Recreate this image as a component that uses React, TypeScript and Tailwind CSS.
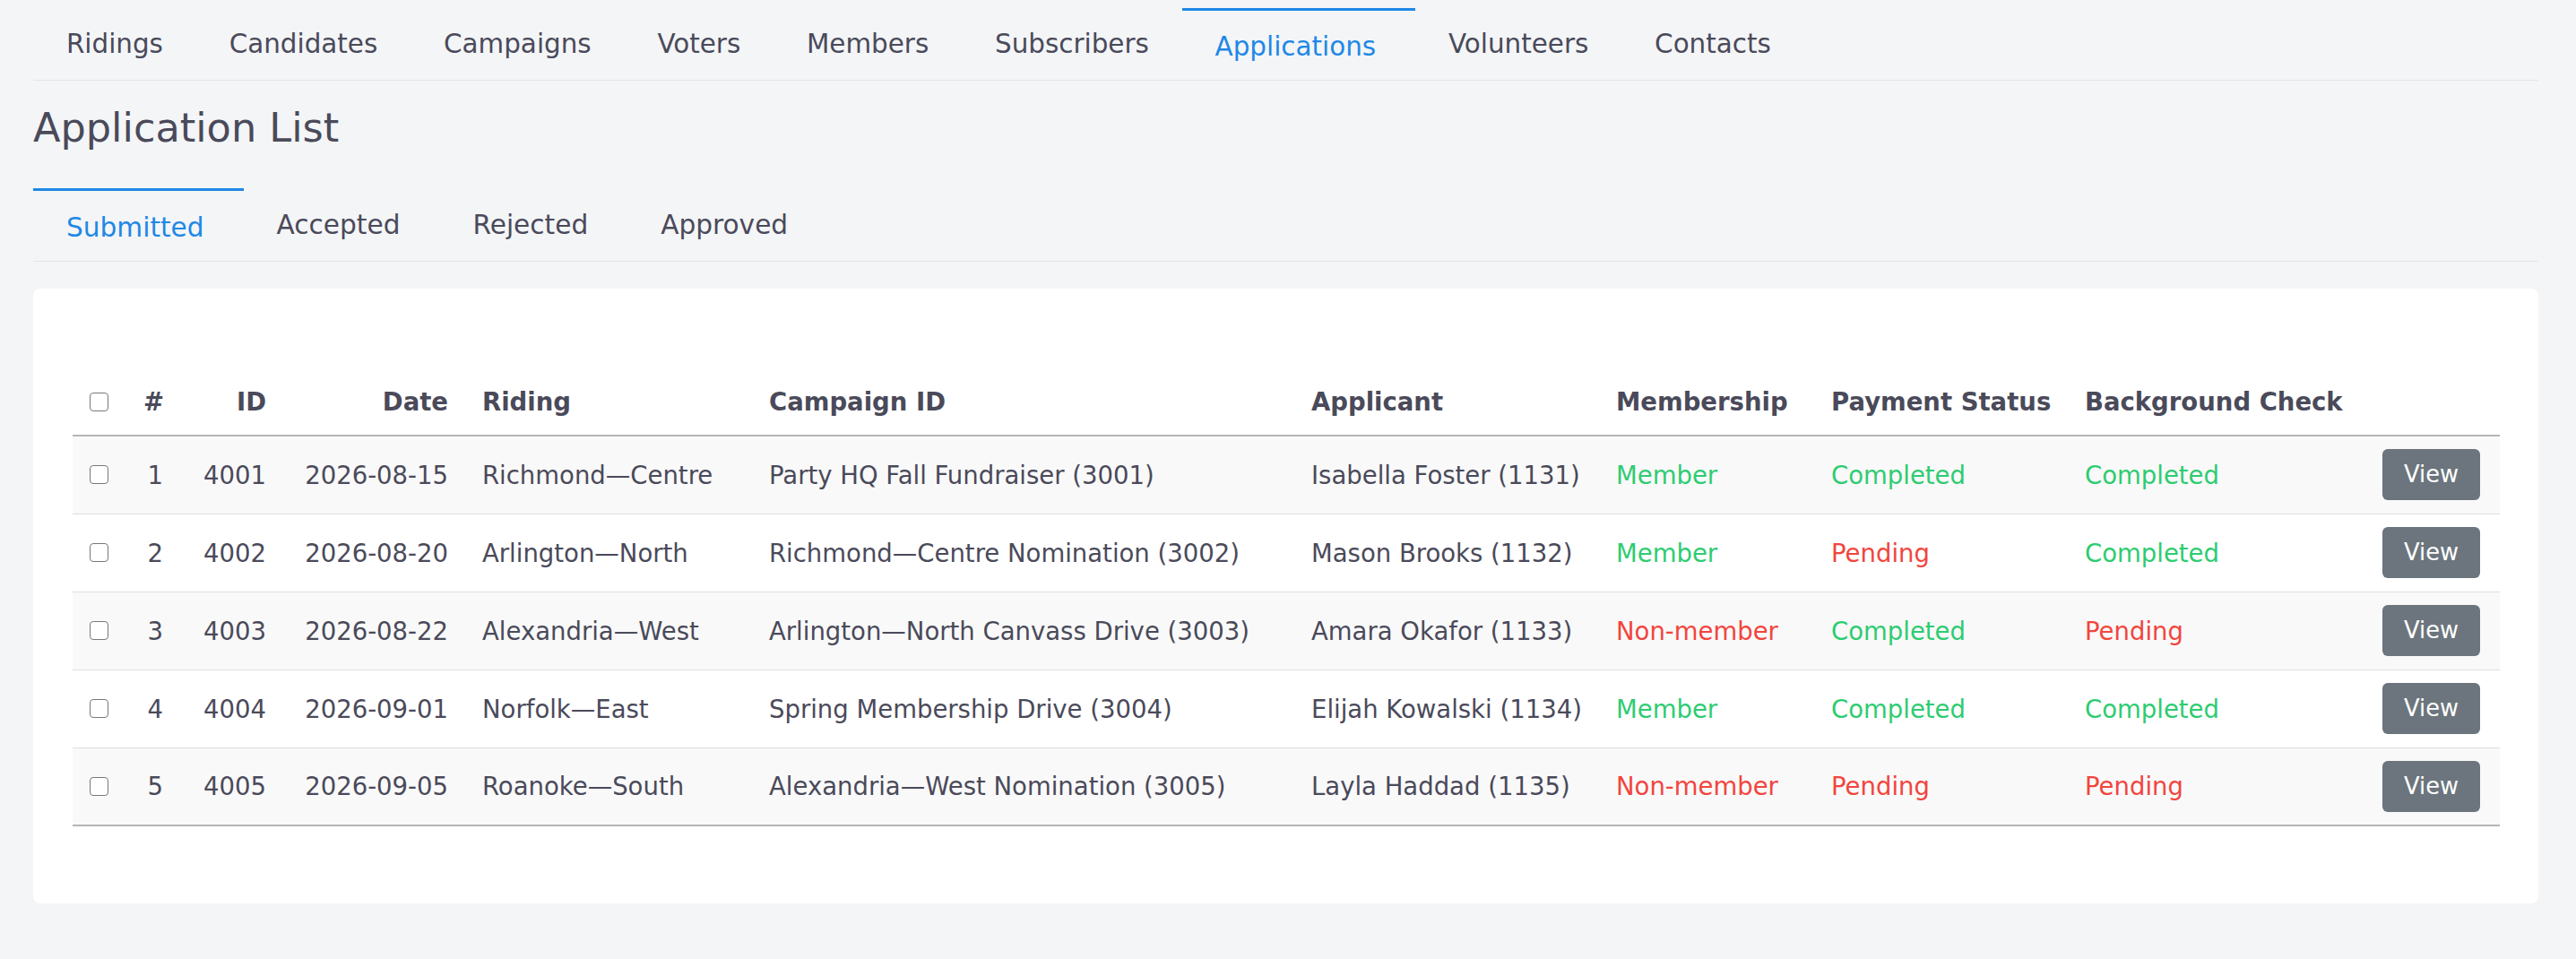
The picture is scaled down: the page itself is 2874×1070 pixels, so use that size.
import React from 'react';

interface Application {
    id: number;
    date: string;
    riding: string;
    campaign: string;
    applicant: string;
    member: boolean;
    payment: 'Completed' | 'Pending';
    background: 'Completed' | 'Pending';
}

const applications: Application[] = [
    { id: 4001, date: '2026-08-15', riding: 'Richmond—Centre', campaign: 'Party HQ Fall Fundraiser (3001)', applicant: 'Isabella Foster (1131)', member: true, payment: 'Completed', background: 'Completed' },
    { id: 4002, date: '2026-08-20', riding: 'Arlington—North', campaign: 'Richmond—Centre Nomination (3002)', applicant: 'Mason Brooks (1132)', member: true, payment: 'Pending', background: 'Completed' },
    { id: 4003, date: '2026-08-22', riding: 'Alexandria—West', campaign: 'Arlington—North Canvass Drive (3003)', applicant: 'Amara Okafor (1133)', member: false, payment: 'Completed', background: 'Pending' },
    { id: 4004, date: '2026-09-01', riding: 'Norfolk—East', campaign: 'Spring Membership Drive (3004)', applicant: 'Elijah Kowalski (1134)', member: true, payment: 'Completed', background: 'Completed' },
    { id: 4005, date: '2026-09-05', riding: 'Roanoke—South', campaign: 'Alexandria—West Nomination (3005)', applicant: 'Layla Haddad (1135)', member: false, payment: 'Pending', background: 'Pending' },
];

const mainTabs = ['Ridings', 'Candidates', 'Campaigns', 'Voters', 'Members', 'Subscribers', 'Applications', 'Volunteers', 'Contacts'];
const subTabs = ['Submitted', 'Accepted', 'Rejected', 'Approved'];

// top nav: inactive tabs are symmetric, the active one is a bit wider on the right
function MainTabs() {
    return (
        <div className="flex border-b border-[#e3e4e7] text-[29.4px]">
            {mainTabs.map((item) =>
                item === 'Applications' ? (
                    <div key={item} className="border-t-[3px] border-[#1e88e5] pl-[36.9px] pr-[44px] pt-[18px] pb-[15px] leading-[44px] text-[#1e88e5]">
                        {item}
                    </div>
                ) : (
                    <div key={item} className="px-[36.9px] pt-[18px] pb-[18px] leading-[44px]">
                        {item}
                    </div>
                )
            )}
        </div>
    );
}

function SubTabs() {
    return (
        <div className="flex border-b border-[#e3e4e7] text-[29.6px]">
            {subTabs.map((item) =>
                item === 'Submitted' ? (
                    <div key={item} className="border-t-[3px] border-[#1e88e5] pl-[37px] pr-[44px] pt-[19px] pb-[15px] leading-[44px] text-[#1e88e5]">
                        {item}
                    </div>
                ) : (
                    <div key={item} className="pl-[37px] pr-[44px] pt-[19px] pb-[18px] leading-[44px]">
                        {item}
                    </div>
                )
            )}
        </div>
    );
}

function Box() {
    return <span className="inline-block w-[21px] h-[21px] align-middle -translate-y-[2px] rounded-[4px] border-[1.5px] border-[#787878] bg-white"></span>;
}

const statusColor = (ok: boolean) => (ok ? 'text-[#2ecc71]' : 'text-[#f2453d]');

export default function App() {
    return (
        <div
            className="min-h-screen bg-[#f4f5f7] pt-[9px] pl-[37px] pr-[42px] text-[#4a4a5a]"
            style={{ fontFamily: '"DejaVu Sans", sans-serif' }}
        >
            <MainTabs />

            <h1 className="mt-[27px] mb-[40px] text-[44.6px] leading-[53px] font-normal">Application List</h1>

            <SubTabs />

            <div className="mt-[30px] bg-white rounded-[8px] p-[44px]">
                <div className="pt-[40px] pb-[42px]">
                    <table className="w-full table-fixed border-collapse text-[27.5px]">
                        <colgroup>
                            <col className="w-[60px]" />
                            <col className="w-[60px]" />
                            <col className="w-[115px]" />
                            <col className="w-[203px]" />
                            <col className="w-[320px]" />
                            <col className="w-[605px]" />
                            <col className="w-[340px]" />
                            <col className="w-[240px]" />
                            <col className="w-[283px]" />
                            <col className="w-[332px]" />
                            <col className="w-[150px]" />
                        </colgroup>
                        <thead>
                            <tr className="border-b-2 border-[#b5b5b5]">
                                <th className="pl-[19px] pt-[20px] pb-[15px] leading-[44px] text-left"><Box /></th>
                                <th className="px-[19px] pt-[20px] pb-[15px] leading-[44px] font-bold text-right">#</th>
                                <th className="px-[19px] pt-[20px] pb-[15px] leading-[44px] font-bold text-right">ID</th>
                                <th className="px-[19px] pt-[20px] pb-[15px] leading-[44px] font-bold text-right">Date</th>
                                <th className="px-[19px] pt-[20px] pb-[15px] leading-[44px] font-bold text-left">Riding</th>
                                <th className="px-[19px] pt-[20px] pb-[15px] leading-[44px] font-bold text-left">Campaign ID</th>
                                <th className="px-[19px] pt-[20px] pb-[15px] leading-[44px] font-bold text-left">Applicant</th>
                                <th className="px-[19px] pt-[20px] pb-[15px] leading-[44px] font-bold text-left">Membership</th>
                                <th className="px-[19px] pt-[20px] pb-[15px] leading-[44px] font-bold text-left whitespace-nowrap">Payment Status</th>
                                <th className="px-[19px] pt-[20px] pb-[15px] leading-[44px] font-bold text-left whitespace-nowrap">Background Check</th>
                                <th className="px-[19px] pt-[20px] pb-[15px] leading-[44px]"></th>
                            </tr>
                        </thead>
                        <tbody>
                            {applications.map((app, i) => (
                                <tr
                                    key={app.id}
                                    className={`${i % 2 === 0 ? 'bg-[#f9f9f9]' : 'bg-white'} ${i === applications.length - 1 ? 'border-b-2 border-[#b5b5b5]' : 'border-b border-[#dedede]'}`}
                                >
                                    <td className="pl-[19px] h-[87px] align-middle leading-[44px]"><Box /></td>
                                    <td className="px-[19px] h-[87px] align-middle leading-[44px] text-right">{i + 1}</td>
                                    <td className="px-[19px] h-[87px] align-middle leading-[44px] text-right">{app.id}</td>
                                    <td className="px-[19px] h-[87px] align-middle leading-[44px] text-right whitespace-nowrap">{app.date}</td>
                                    <td className="px-[19px] h-[87px] align-middle leading-[44px] whitespace-nowrap">{app.riding}</td>
                                    <td className="px-[19px] h-[87px] align-middle leading-[44px] whitespace-nowrap">{app.campaign}</td>
                                    <td className="px-[19px] h-[87px] align-middle leading-[44px] whitespace-nowrap">{app.applicant}</td>
                                    <td className={`px-[19px] h-[87px] align-middle leading-[44px] whitespace-nowrap ${statusColor(app.member)}`}>
                                        {app.member ? 'Member' : 'Non-member'}
                                    </td>
                                    <td className={`px-[19px] h-[87px] align-middle leading-[44px] ${statusColor(app.payment === 'Completed')}`}>{app.payment}</td>
                                    <td className={`px-[19px] h-[87px] align-middle leading-[44px] ${statusColor(app.background === 'Completed')}`}>{app.background}</td>
                                    <td className="pl-[19px] pr-[22px] h-[87px] py-0 align-middle">
                                        <button className="block w-[109px] h-[57px] rounded-[6px] bg-[#6c757d] text-white text-[25.7px] leading-[57px] text-center">
                                            View
                                        </button>
                                    </td>
                                </tr>
                            ))}
                        </tbody>
                    </table>
                </div>
            </div>
        </div>
    );
}
